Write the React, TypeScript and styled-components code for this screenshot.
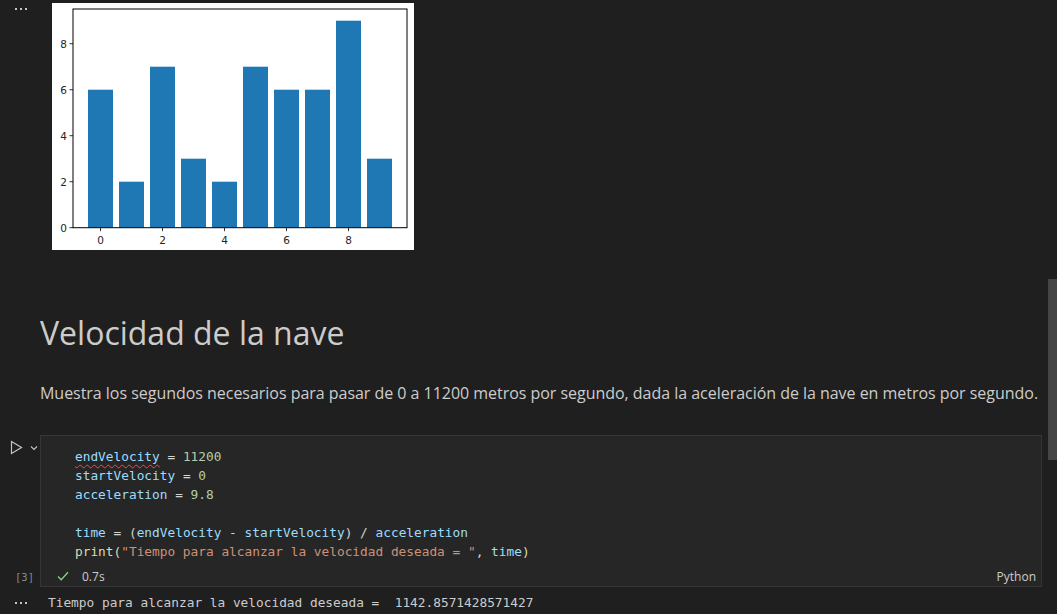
import React from "react";
import styled, { createGlobalStyle } from "styled-components";

const GlobalStyle = createGlobalStyle`
  html, body {
    margin: 0;
    padding: 0;
    background: #1f1f1f;
    overflow: hidden;
  }
`;

const monoFont = `"DejaVu Sans Mono", "Liberation Mono", monospace`;
const uiFont = `"Open Sans", "Noto Sans", sans-serif`;

const barValues = [6, 2, 7, 3, 2, 7, 6, 6, 9, 3];

const Page = styled.div`
  position: relative;
  width: 1057px;
  height: 614px;
  overflow: hidden;
  background: #1f1f1f;
  display: flex;
  flex-direction: column;
`;

const OutputRow = styled.div<{ $top?: number; $align?: string }>`
  display: flex;
  align-items: ${(p) => p.$align ?? "center"};
  padding-top: ${(p) => p.$top ?? 0}px;
`;

const OutputGutter = styled.div<{ $width: number; $offset?: number }>`
  width: ${(p) => p.$width}px;
  flex-shrink: 0;
  display: flex;
  padding-left: 15px;
  padding-top: ${(p) => p.$offset ?? 0}px;
  box-sizing: border-box;
`;

const Dots = styled.div`
  display: flex;
  gap: 3px;
  span {
    width: 2px;
    height: 2px;
    background: #c4c4c4;
  }
`;

const Ellipsis = () => (
  <Dots>
    <span />
    <span />
    <span />
  </Dots>
);

const ChartBox = styled.div`
  width: 362px;
  height: 247px;
  background: #ffffff;
  svg {
    display: block;
  }
`;

const MarkdownCell = styled.div`
  padding: 63px 0 0 40px;
  color: #cccccc;
  font-family: ${uiFont};
`;

const Heading = styled.h1`
  margin: 0;
  font-size: 32px;
  line-height: 40px;
  font-weight: 400;
`;

const Paragraph = styled.p`
  margin: 28px 0 0;
  font-size: 16px;
  letter-spacing: -0.03px;
  line-height: 24px;
  white-space: nowrap;
`;

const CodeCellRow = styled.div`
  display: flex;
  margin-top: 30px;
`;

const CellGutter = styled.div`
  width: 40px;
  flex-shrink: 0;
  display: flex;
  flex-direction: column;
  justify-content: space-between;
  padding: 5px 0 4px;
  box-sizing: border-box;
`;

const RunControls = styled.div`
  display: flex;
  align-items: center;
  gap: 7px;
  padding-left: 10px;
  svg {
    display: block;
  }
`;

const ExecCount = styled.div`
  font-family: ${monoFont};
  font-size: 10.5px;
  color: #8a8a8a;
  padding-left: 15px;
`;

const CellBox = styled.div`
  width: 1002px;
  border: 1px solid #363636;
  background: #262626;
  box-sizing: border-box;
`;

const CodeArea = styled.pre`
  margin: 0;
  padding: 11px 0 0 34px;
  font-family: ${monoFont};
  font-size: 12.8px;
  line-height: 19px;
  color: #d4d4d4;
`;

const Line = styled.div`
  height: 19px;
`;

const Tok = styled.span<{ $kind: "var" | "num" | "str" | "fn" | "op" }>`
  color: ${(p) =>
    ({
      var: "#9cdcfe",
      num: "#b5cea8",
      str: "#ce9178",
      fn: "#dcdcaa",
      op: "#d4d4d4",
    })[p.$kind]};
`;

const Squiggle = styled.span`
  color: #9cdcfe;
  text-decoration: underline wavy #f14c4c;
  text-decoration-thickness: 1px;
  text-underline-offset: 3px;
`;

const StatusBar = styled.div`
  display: flex;
  align-items: center;
  height: 20px;
  padding: 5px 5px 0 16px;
  font-family: ${uiFont};
  font-size: 12px;
  color: #cccccc;
`;

const Duration = styled.span`
  margin-left: 13px;
`;

const Language = styled.span`
  margin-left: auto;
`;

const OutputText = styled.pre`
  margin: 0;
  font-family: ${monoFont};
  font-size: 12.8px;
  line-height: 19px;
  color: #cccccc;
`;

const ScrollThumb = styled.div`
  position: absolute;
  right: 0;
  top: 279px;
  width: 9px;
  height: 181px;
  background: #454545;
`;

const BarChart = () => {
  const x0 = 21;
  const x1 = 355;
  const yTop = 6;
  const yBase = 224.7;
  const unit = 23;
  const cx = (i: number) => 48.5 + 31 * i;
  return (
    <svg width="362" height="247" viewBox="0 0 362 247">
      {barValues.map((v, i) => (
        <rect
          key={i}
          x={cx(i) - 12.5}
          y={yBase - v * unit}
          width={25}
          height={v * unit}
          fill="#1f77b4"
        />
      ))}
      <rect x={x0} y={yTop} width={x1 - x0} height={yBase - yTop} fill="none" stroke="#000" strokeWidth="1" />
      {[0, 2, 4, 6, 8].map((t) => (
        <g key={"y" + t}>
          <line x1={x0 - 3.5} x2={x0} y1={yBase - t * unit} y2={yBase - t * unit} stroke="#000" strokeWidth="0.8" />
          <text
            x={x0 - 6}
            y={yBase - t * unit + 3.8}
            textAnchor="end"
            fontFamily="DejaVu Sans, sans-serif"
            fontSize="10.5"
            fill="#262626"
          >
            {t}
          </text>
        </g>
      ))}
      {[0, 2, 4, 6, 8].map((t) => (
        <g key={"x" + t}>
          <line x1={cx(t)} x2={cx(t)} y1={yBase} y2={yBase + 3.5} stroke="#000" strokeWidth="0.8" />
          <text
            x={cx(t)}
            y={yBase + 16}
            textAnchor="middle"
            fontFamily="DejaVu Sans, sans-serif"
            fontSize="10.5"
            fill="#262626"
          >
            {t}
          </text>
        </g>
      ))}
    </svg>
  );
};

const RunIcon = () => (
  <svg width="13" height="15" viewBox="0 0 13 15">
    <path d="M1.5 1.5 L11.5 7.5 L1.5 13.5 Z" fill="none" stroke="#c5c5c5" strokeWidth="1.2" strokeLinejoin="miter" />
  </svg>
);

const ChevronIcon = () => (
  <svg width="8" height="6" viewBox="0 0 8 6">
    <path d="M1 1.5 L4 4.5 L7 1.5" fill="none" stroke="#c5c5c5" strokeWidth="1.1" />
  </svg>
);

const CheckIcon = () => (
  <svg width="12" height="12" viewBox="0 0 12 12">
    <path d="M1 6.5 L4.2 9.8 L11 2.2" fill="none" stroke="#89d185" strokeWidth="1.3" />
  </svg>
);

export default function App() {
  return (
    <Page>
      <GlobalStyle />
      <OutputRow $top={3} $align="flex-start">
        <OutputGutter $width={52} $offset={5}>
          <Ellipsis />
        </OutputGutter>
        <ChartBox>
          <BarChart />
        </ChartBox>
      </OutputRow>

      <MarkdownCell>
        <Heading>Velocidad de la nave</Heading>
        <Paragraph>
          Muestra los segundos necesarios para pasar de 0 a 11200 metros por segundo, dada la aceleración de la nave en
          metros por segundo.
        </Paragraph>
      </MarkdownCell>

      <CodeCellRow>
        <CellGutter>
          <RunControls>
            <RunIcon />
            <ChevronIcon />
          </RunControls>
          <ExecCount>[3]</ExecCount>
        </CellGutter>
        <CellBox>
          <CodeArea>
            <Line>
              <Squiggle>endVelocity</Squiggle>
              <Tok $kind="op"> = </Tok>
              <Tok $kind="num">11200</Tok>
            </Line>
            <Line>
              <Tok $kind="var">startVelocity</Tok>
              <Tok $kind="op"> = </Tok>
              <Tok $kind="num">0</Tok>
            </Line>
            <Line>
              <Tok $kind="var">acceleration</Tok>
              <Tok $kind="op"> = </Tok>
              <Tok $kind="num">9.8</Tok>
            </Line>
            <Line />
            <Line>
              <Tok $kind="var">time</Tok>
              <Tok $kind="op"> = (</Tok>
              <Tok $kind="var">endVelocity</Tok>
              <Tok $kind="op"> - </Tok>
              <Tok $kind="var">startVelocity</Tok>
              <Tok $kind="op">) / </Tok>
              <Tok $kind="var">acceleration</Tok>
            </Line>
            <Line>
              <Tok $kind="fn">print(</Tok>
              <Tok $kind="str">"Tiempo para alcanzar la velocidad deseada = "</Tok>
              <Tok $kind="op">, </Tok>
              <Tok $kind="var">time</Tok>
              <Tok $kind="fn">)</Tok>
            </Line>
          </CodeArea>
          <StatusBar>
            <CheckIcon />
            <Duration>0.7s</Duration>
            <Language>Python</Language>
          </StatusBar>
        </CellBox>
      </CodeCellRow>

      <OutputRow $top={6}>
        <OutputGutter $width={48}>
          <Ellipsis />
        </OutputGutter>
        <OutputText>Tiempo para alcanzar la velocidad deseada =  1142.8571428571427</OutputText>
      </OutputRow>
      <ScrollThumb />
    </Page>
  );
}
